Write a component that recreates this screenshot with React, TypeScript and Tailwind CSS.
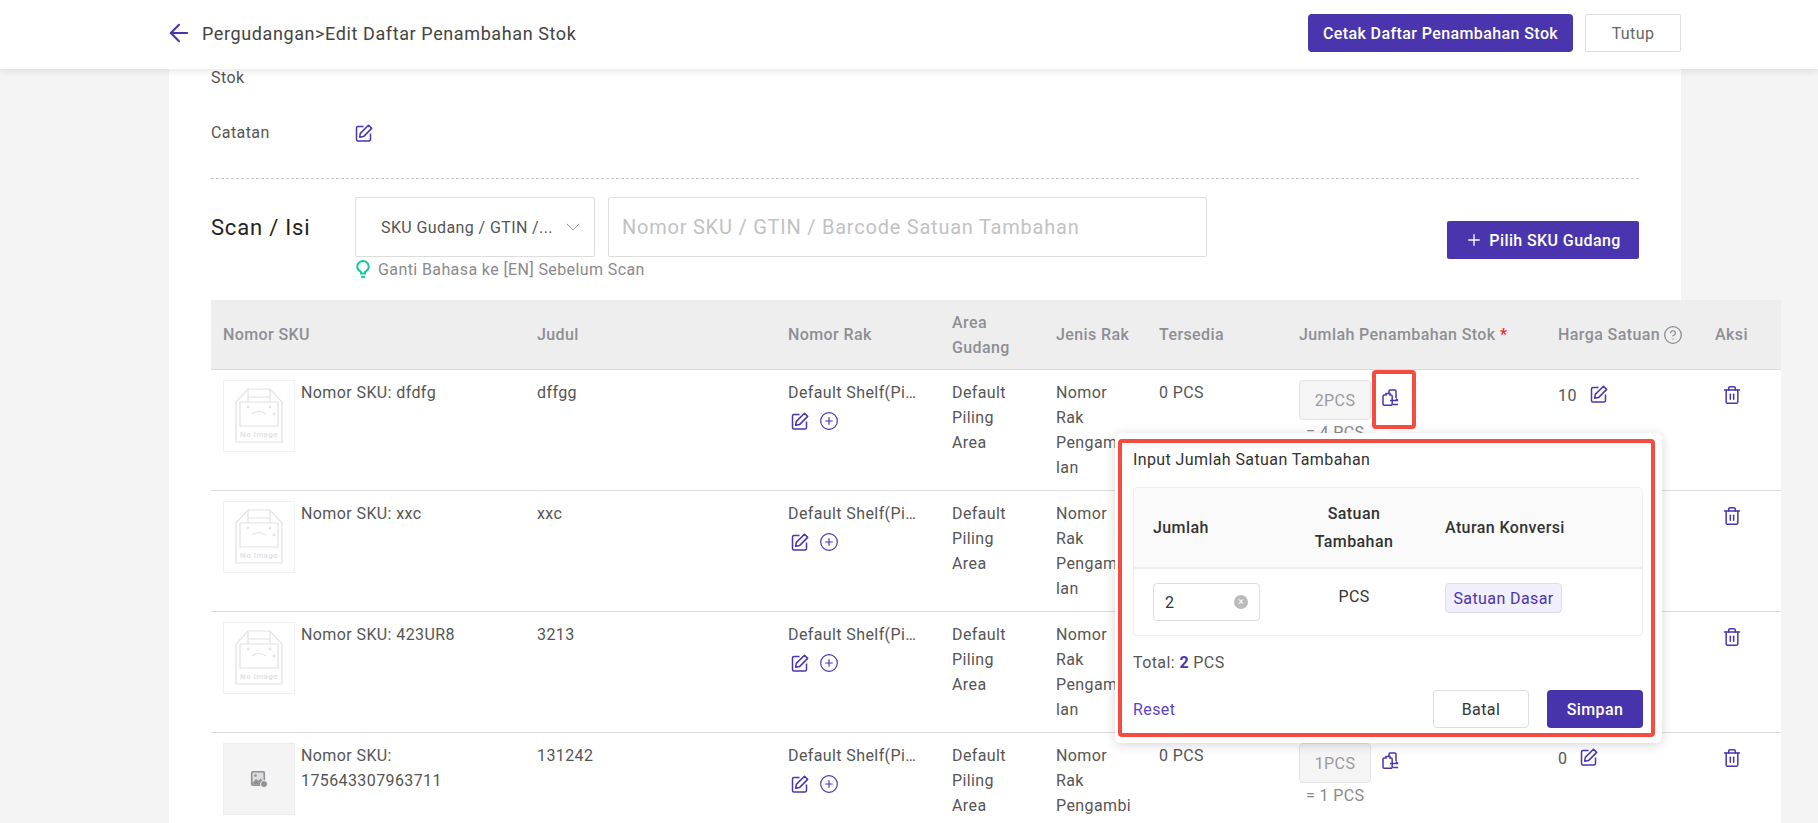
import { ArrowLeft, ChevronDown, CircleHelp, CirclePlus, Plus, Trash2 } from "lucide-react";

const gridCols = "grid grid-cols-[314px_251px_164px_104px_103px_140px_259px_157px_78px]";

const rows = [
  { sku: "Nomor SKU: dfdfg", title: "dffgg", qty: "2PCS", total: "= 4 PCS", price: "10", empty: false },
  { sku: "Nomor SKU: xxc", title: "xxc", qty: "1PCS", total: "= 1 PCS", price: "0", empty: false },
  { sku: "Nomor SKU: 423UR8", title: "3213", qty: "1PCS", total: "= 1 PCS", price: "0", empty: false },
  { sku: "Nomor SKU: 175643307963711", title: "131242", qty: "1PCS", total: "= 1 PCS", price: "0", empty: true },
];

function EditIcon() {
  return (
    <svg width="18" height="18" viewBox="0 0 18 18" fill="none" stroke="#4a35ae" strokeWidth="1.5" strokeLinejoin="round" className="shrink-0">
      <path d="M8.5 2.5H3A1.5 1.5 0 0 0 1.5 4v11.5A1.5 1.5 0 0 0 3 17h11a1.5 1.5 0 0 0 1.5-1.5V9.5" />
      <path d="M13.5 1.2l3.2 3.2-8.2 8.2-3.8.6.6-3.8z" />
    </svg>
  );
}

function ConvertIcon() {
  return (
    <svg width="17" height="18" viewBox="0 0 17 18" fill="none" stroke="#4a35ae" strokeWidth="1.5">
      <path d="M7 4V2.2A1.2 1.2 0 0 1 8.2 1h4.6A1.2 1.2 0 0 1 14 2.2V9" />
      <path d="M2.2 6H4V4.5h4V6h1A1.2 1.2 0 0 1 10.2 7.2V15A1.2 1.2 0 0 1 9 16.2H2.2A1.2 1.2 0 0 1 1 15V7.2A1.2 1.2 0 0 1 2.2 6z" />
      <path d="M8 11.5h8M14 9.6l2 1.9M16 15.5H11" />
    </svg>
  );
}

function BulbIcon() {
  return (
    <svg width="16" height="18" viewBox="0 0 16 18" fill="none" stroke="#14c9a0" strokeWidth="2" className="shrink-0">
      <path d="M6 13.5V12C4 10.8 2.2 9 2.2 6.8a5.8 5.8 0 0 1 11.6 0C13.8 9 12 10.8 10 12v1.5z" />
      <path d="M6 16.8h4" />
    </svg>
  );
}

function NoImage() {
  return (
    <div className="flex h-[72px] w-[72px] shrink-0 items-center justify-center border border-[#f1f1f3] bg-white">
      <svg width="48" height="56" viewBox="0 0 48 56" fill="none" stroke="#e2e2e8" strokeWidth="1.2">
        <path d="M1 14 L13 1 H35 L47 14 V54 H1 Z" />
        <path d="M5 14 H43 V38 H5 Z" />
        <path d="M13 1 V9 H35 V1 M13 9 L13 14 M35 9 L35 14" />
        <path d="M17 26 q7-5 14 0" />
        <circle cx="13" cy="19" r="0.8" fill="#e2e2e8" />
        <circle cx="35" cy="19" r="0.8" fill="#e2e2e8" />
        <circle cx="39" cy="26" r="0.8" fill="#e2e2e8" />
        <text x="24" y="49" textAnchor="middle" fontSize="8" fontWeight="700" fill="#e2e2e8" stroke="none" fontFamily="Roboto, sans-serif">No Image</text>
      </svg>
    </div>
  );
}

function EmptyImage() {
  return (
    <div className="flex h-[72px] w-[72px] shrink-0 items-center justify-center border border-[#ececec] bg-[#f4f4f5]">
      <svg width="18" height="18" viewBox="0 0 18 18" fill="none">
        <rect x="1.7" y="1.7" width="12.6" height="13.6" rx="1.2" fill="#dcdcde" stroke="#8f8f94" strokeWidth="1.6" />
        <circle cx="5.5" cy="5.5" r="1.3" fill="#8f8f94" />
        <path d="M2.5 13l3.5-4 2.5 2 2-2.5 3 3V14.5h-11z" fill="#8f8f94" />
        <circle cx="14" cy="14" r="3.5" fill="#8f8f94" stroke="#f4f4f5" />
      </svg>
    </div>
  );
}

export default function App() {
  return (
    <div className="relative h-[823px] overflow-hidden bg-[#f4f4f4] font-['Roboto',sans-serif] text-[16px] leading-[25px] tracking-[0.4px] text-[#555]">
      <header className="relative z-20 flex h-[69px] items-center bg-white pb-[3px] pl-[165px] pr-[137px] shadow-[0_2px_8px_rgba(0,0,0,0.1)]">
        <ArrowLeft size={28} strokeWidth={1.8} className="text-[#4a35ae]" />
        <span className="ml-[9px] text-[18px] tracking-[0.6px] text-[#444]">Pergudangan&gt;Edit Daftar Penambahan Stok</span>
        <button className="ml-auto h-[38px] w-[265px] rounded-[4px] bg-[#4a35ae] font-medium text-white">Cetak Daftar Penambahan Stok</button>
        <button className="ml-3 h-[38px] w-[96px] rounded-[2px] border border-[#ddd] bg-white text-[#666]">Tutup</button>
      </header>

      <main className="ml-[169px] h-full w-[1512px] bg-white pl-[42px]">
        <div className="leading-[18px]">Stok</div>
        <div className="mt-[33px] flex h-[25px] items-center">
          <span className="w-[144px]">Catatan</span>
          <EditIcon />
        </div>
        <div className="mt-[33px] w-[1428px] border-t border-dashed border-[#c9c9c9]" />

        <div className="mt-[18px] flex w-[1428px]">
          <div className="flex h-[60px] w-[144px] items-center text-[22px] tracking-[0.8px] text-[#222]">Scan / Isi</div>
          <div>
            <div className="flex gap-[13px]">
              <div className="flex h-[60px] w-[240px] items-center rounded-[2px] border border-[#ddd] pl-[25px] pr-[9px]">
                <span className="whitespace-nowrap text-[#555]">SKU Gudang / GTIN /...</span>
                <ChevronDown size={24} strokeWidth={1} className="ml-auto text-[#999]" />
              </div>
              <input
                placeholder="Nomor SKU / GTIN / Barcode Satuan Tambahan"
                className="h-[60px] w-[599px] rounded-[2px] border border-[#ddd] px-[13px] text-[20px] tracking-[0.77px] placeholder:text-[#c2c2c2]"
              />
            </div>
            <div className="flex h-[24px] items-center text-[#8a8a8a]">
              <BulbIcon />
              <span className="ml-[7px]">Ganti Bahasa ke [EN] Sebelum Scan</span>
            </div>
          </div>
          <button className="ml-auto mt-[24px] flex h-[38px] w-[192px] items-center justify-center gap-[6px] rounded-[2px] bg-[#4a35ae] font-medium text-white">
            <Plus size={18} strokeWidth={1.8} />
            Pilih SKU Gudang
          </button>
        </div>

        <div className="mt-[19px] w-[1570px] bg-white">
          <div className={`${gridCols} h-[70px] items-center border-b border-[#dcdcdc] bg-[#eeeeee] font-medium text-[#8e8e96]`}>
            <div className="px-3">Nomor SKU</div>
            <div className="px-3">Judul</div>
            <div className="px-3">Nomor Rak</div>
            <div className="px-3">Area Gudang</div>
            <div className="px-3">Jenis Rak</div>
            <div className="px-3">Tersedia</div>
            <div className="px-3">
              Jumlah Penambahan Stok <span className="text-[#f5222d]">*</span>
            </div>
            <div className="flex items-center gap-[3px] whitespace-nowrap px-3">
              Harga Satuan <CircleHelp size={20} strokeWidth={1.6} />
            </div>
            <div className="px-3">Aksi</div>
          </div>

          {rows.map((row) => (
            <div key={row.sku} className={`${gridCols} h-[121px] border-b border-[#dcdcdc] pt-[10px]`}>
              <div className="flex gap-[6px] pl-3">
                {row.empty ? <EmptyImage /> : <NoImage />}
                <span className="w-[170px]">{row.sku}</span>
              </div>
              <div className="px-3">{row.title}</div>
              <div className="pl-3">
                <div className="whitespace-nowrap">Default Shelf(Pi…</div>
                <div className="mt-[6px] flex items-center gap-[10px] pl-[3px] text-[#4a35ae]">
                  <EditIcon />
                  <CirclePlus size={20} strokeWidth={1.4} />
                </div>
              </div>
              <div className="px-3">
                Default
                <br />
                Piling
                <br />
                Area
              </div>
              <div className="pl-3">
                Nomor
                <br />
                Rak
                <br />
                Pengambi
                <br />
                lan
              </div>
              <div className="px-3">0 PCS</div>
              <div className="px-3">
                <div className="flex items-start gap-[11px]">
                  <div className="flex h-[40px] w-[72px] items-center justify-center rounded-[4px] border border-[#e4e4e4] bg-[#f5f5f5] text-[#9a9aa0]">
                    {row.qty}
                  </div>
                  <div className="pt-[9px]">
                    <ConvertIcon />
                  </div>
                </div>
                <div className="pl-[7px] text-[#8a8a8a]">{row.total}</div>
              </div>
              <div className="flex items-start gap-[13px] px-3 pt-[3px]">
                <span>{row.price}</span>
                <div className="mt-[2px]">
                  <EditIcon />
                </div>
              </div>
              <div className="pl-[19px] pt-[5px]">
                <Trash2 size={20} strokeWidth={1.8} className="text-[#4a35ae]" />
              </div>
            </div>
          ))}
        </div>
      </main>

      {/* red annotation on the convert icon */}
      <div className="absolute left-[1372px] top-[370px] z-30 h-[59px] w-[44px] rounded-[4px] border-[4px] border-[#f44c40]" />

      {/* popover */}
      <div className="absolute left-[1115px] top-[433px] z-10 w-[547px] rounded-[6px] bg-white px-[18px] pb-[15px] pt-[14px] shadow-[0_2px_12px_rgba(0,0,0,0.16)]">
        <div className="absolute left-[263px] top-[-5px] h-[10px] w-[10px] rotate-45 bg-white" />
        <div className="relative text-[#333]">Input Jumlah Satuan Tambahan</div>
        <div className="mt-[15px] w-[510px] overflow-hidden rounded-[4px] border border-[#eeeeee]">
          <div className="grid h-[81px] grid-cols-[157px_126px_227px] items-center border-b-2 border-[#eeeeee] bg-[#fafafa] font-medium text-[#333]">
            <div className="pl-[19px]">Jumlah</div>
            <div className="text-center leading-[28px]">
              Satuan
              <br />
              Tambahan
            </div>
            <div className="pl-[28px]">Aturan Konversi</div>
          </div>
          <div className="grid h-[66px] grid-cols-[157px_126px_227px] pt-[14px]">
            <div className="pl-[19px]">
              <div className="flex h-[38px] w-[107px] items-center justify-between rounded-[4px] border border-[#dddddd] pl-[11px] pr-[11px] text-[#333]">
                2
                <span className="flex h-[14px] w-[14px] items-center justify-center rounded-full bg-[#bbbbbb] text-[10px] leading-none text-white">×</span>
              </div>
            </div>
            <div className="pt-px text-center text-[#333]">PCS</div>
            <div className="pl-[28px]">
              <span className="inline-flex h-[30px] w-[117px] items-center justify-center rounded-[4px] border border-[#dedbf0] bg-[#f1effc] text-[#4a35ae]">Satuan Dasar</span>
            </div>
          </div>
        </div>
        <div className="mt-[14px]">
          Total: <b className="font-bold text-[#4a35ae]">2</b> PCS
        </div>
        <div className="mt-[15px] flex w-[510px] items-center">
          <span className="text-[#5a44c8]">Reset</span>
          <button className="ml-auto h-[38px] w-[96px] rounded-[4px] border border-[#dddddd] bg-white text-[#333]">Batal</button>
          <button className="ml-[18px] h-[38px] w-[96px] rounded-[4px] bg-[#4733ac] font-medium text-white">Simpan</button>
        </div>
      </div>

      {/* red annotation on the popover */}
      <div className="absolute left-[1118px] top-[439px] z-30 h-[298px] w-[537px] rounded-[4px] border-[4px] border-[#f44c40]" />
    </div>
  );
}
